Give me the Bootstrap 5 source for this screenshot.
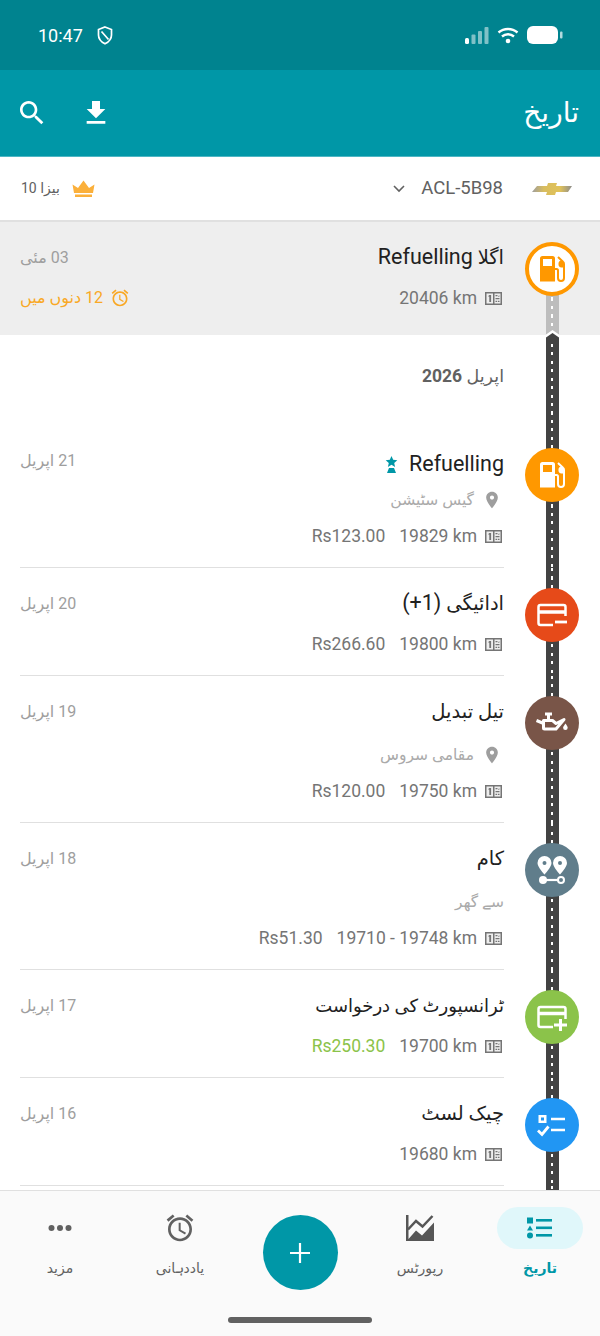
<!DOCTYPE html>
<html lang="ur" dir="rtl">
<head>
    <meta charset="UTF-8">
    <title>تاریخ</title>
    <link href="https://cdn.jsdelivr.net/npm/bootstrap@5.3.0/dist/css/bootstrap.min.css" rel="stylesheet">
    <style>
        body {
            font-family: Roboto, "DejaVu Sans", sans-serif;
            background: #fff;
            overflow: hidden;
        }
        .app-shell { height: 1336px; }

        .status-bar { height: 70px; flex: none; background: #00838f; color: #fff; padding: 0 37px 0 38px; font-size: 18px; }
        .status-time { margin-right: 6px; }
        .app-bar { height: 87px; flex: none; background: #0097a7; color: #fff; padding: 0 21px 0 16px; border-bottom: 1px solid #4db6c4; }
        .app-title { font-size: 28px; line-height: 1; }
        .bar-actions { gap: 32px; }
        .vehicle-bar { height: 65px; flex: none; border-bottom: 2px solid #e0e0e0; padding: 0 28px 0 21px; }
        .vehicle-name { font-size: 18.500px; color: #616161; margin: 0 29px 0 16px; }
        .plan-label { font-size: 14px; color: #616161; margin-right: 12px; }

        .timeline { min-height: 0; }
        .entry-row { display: flex; }
        .entry-row.is-next { background: #eee; height: 113px; }
        .road-col {
            flex: 0 0 96px;
            background:
                repeating-linear-gradient(to bottom, #fff 0 3px, transparent 3px 8.500px) center / 2px 100% no-repeat,
                linear-gradient(#424242, #424242) center / 13px 100% no-repeat;
        }
        .is-next .road-col {
            background:
                repeating-linear-gradient(to bottom, #fff 0 3px, transparent 3px 8.500px) center 50px / 2px 100% no-repeat,
                linear-gradient(#bdbdbd, #bdbdbd) center 50px / 13px 100% no-repeat;
        }
        .road-tip { width: 13px; height: 9px; margin-top: auto; margin-bottom: -4px; position: relative; z-index: 1; }
        .stop-dot {
            width: 54px; height: 54px; border-radius: 50%; margin-top: 20px; color: #fff; flex: none;
            display: flex; align-items: center; justify-content: center;
        }
        .stop-dot svg { flex: none; }
        .stop-dot.upcoming { background: #fff; border: 4px solid #ff9800; color: #ff9800; }
        .dot-orange { background: #ff9800; }
        .dot-red { background: #e64a19; }
        .dot-brown { background: #795548; }
        .dot-slate { background: #607d8b; }
        .dot-green { background: #8bc34a; }
        .dot-blue { background: #2196f3; }

        .entry-body { flex: 1; margin-left: 20px; border-bottom: 1px solid #e0e0e0; padding-bottom: 19px; min-width: 0; }
        .is-next .entry-body { border: 0; padding: 0; }
        .entry-title { font-size: 19.500px; line-height: 28px; min-height: 50px; padding-top: 22px; color: #212121; margin-bottom: 14px; }
        .entry-title.title-tight { font-size: 18px; }
        .title-latin { font-size: 21.500px; line-height: 1; }
        .entry-place { font-size: 15.500px; line-height: 24px; color: #aaa; padding-top: 3px; margin-bottom: 12px; }
        .entry-meta { font-size: 17.500px; line-height: 24px; color: #757575; gap: 14px; padding-right: 2px; }
        .entry-date { font-size: 16px; line-height: 24px; padding-top: 24px; color: #9e9e9e; text-align: left; }
        .latin-title .entry-title { margin-bottom: 7px; }
        .latin-title .entry-date { padding-top: 21px; }
        .odo-wrap { gap: 8px; }
        .place-pin { margin-left: 8px; margin-right: 2px; }
        .remind-line { font-size: 16px; line-height: 24px; color: #f9a825; margin-top: 16px; gap: 7px; }
        .fav-mark { margin-left: 0; margin-right: 11px; }
        .amount-in { color: #8bc34a; }

        .month-row { height: 93px; }
        .month-label { font-size: 17.500px; line-height: 24px; color: #616161; padding-top: 29px; }

        .bottom-tabs { background: #fafafa; border-top: 1px solid #e0e0e0; height: 146px; flex: none; }
        .tab-strip { height: 126px; }
        .tab-icon { width: 86px; height: 42px; margin-top: 16px; border-radius: 21px; }
        .tab-item { color: #616161; font-size: 14px; }
        .tab-item.active-tab { color: #0097a7; font-weight: 700; }
        .active-tab .tab-icon { background: #e0f7fa; }
        .tab-text { line-height: 24px; margin-top: 7px; }
        .fab-add {
            width: 75px; height: 75px; margin-top: 24px; padding: 0; background: #0097a7; border: 0;
            display: inline-flex; align-items: center; justify-content: center;
        }
        .home-pill { width: 144px; height: 6px; border-radius: 3px; background: #616161; }
    </style>
</head>
<body>
<svg width="0" height="0" class="d-block">
    <defs>
        <symbol id="i-pump" viewBox="0 0 54 54">
            <path fill="currentColor" fill-rule="evenodd" d="M15 16.500a2.500 2.500 0 0 1 2.500-2.500h10a2.500 2.500 0 0 1 2.500 2.500V39.500H15zM18 17v7h9v-7z"/>
            <path fill="none" stroke="currentColor" stroke-width="2" d="M30 27h1.500a1.500 1.500 0 0 1 1.500 1.500v7.500a3 3 0 0 0 6 0V22a3 3 0 0 0-1-2.200L33 15"/>
            <path fill="currentColor" d="M33.500 22a3 3 0 0 1 3-3.500l2 2v5h-2a3 3 0 0 1-3-3.500z"/>
        </symbol>
        <symbol id="i-card-minus" viewBox="0 0 54 54">
            <path fill="none" stroke="#fff" stroke-width="2.500" d="M28 37H15.500a2 2 0 0 1-2-2V19a2 2 0 0 1 2-2h23a2 2 0 0 1 2 2v9"/>
            <path stroke="#fff" stroke-width="3.500" d="M14 24h26"/>
            <path stroke="#fff" stroke-width="2.800" d="M30 34h12"/>
        </symbol>
        <symbol id="i-card-plus" viewBox="0 0 54 54">
            <path fill="none" stroke="#fff" stroke-width="2.500" d="M28 37H15.500a2 2 0 0 1-2-2V19a2 2 0 0 1 2-2h23a2 2 0 0 1 2 2v10"/>
            <path stroke="#fff" stroke-width="3.500" d="M14 23.500h26"/>
            <path stroke="#fff" stroke-width="3" d="M29 35h13M35.500 29v12"/>
        </symbol>
        <symbol id="i-oil" viewBox="0 0 54 54">
            <path fill="none" stroke="#fff" stroke-width="3" stroke-linejoin="round" d="M18.500 24.500h9l3.500 3 8-4-8 9.500H19.500a1 1 0 0 1-1-1zM20 18h7M23.500 18v6.500M17.500 27l-6-2.500"/>
            <path fill="#fff" d="M40.500 27.500c1.200 2 2.200 3 2.200 4.300a2.300 2.300 0 0 1-4.600 0c0-1.300 1.200-2.300 2.400-4.300z"/>
        </symbol>
        <symbol id="i-route" viewBox="0 0 54 54">
            <path fill="#fff" fill-rule="evenodd" d="M19.500 13a7 7 0 0 1 7 7c0 4-7 11.500-7 11.500s-7-7.500-7-11.500a7 7 0 0 1 7-7zm0 5a2 2 0 1 0 0 4 2 2 0 0 0 0-4zM35 13a7 7 0 0 1 7 7c0 4-7 11.500-7 11.500s-7-7.500-7-11.500a7 7 0 0 1 7-7zm0 5a2 2 0 1 0 0 4 2 2 0 0 0 0-4z"/>
            <circle cx="18" cy="37" r="4" fill="#fff"/>
            <circle cx="36" cy="37" r="3" fill="none" stroke="#fff" stroke-width="2"/>
            <path stroke="#fff" stroke-width="2.200" d="M20 37h13"/>
        </symbol>
        <symbol id="i-check" viewBox="0 0 54 54">
            <path fill="#fff" fill-rule="evenodd" d="M13.500 17h8v8h-8zm2.500 2.500v3h3v-3z"/>
            <path stroke="#fff" stroke-width="2.400" d="M26 21h14M26 32h14"/>
            <path fill="none" stroke="#fff" stroke-width="2.800" d="M13 32.500l4 4 6.500-8"/>
        </symbol>
        <symbol id="i-odo" viewBox="0 0 17 13">
            <rect width="17" height="13" fill="#757575"/>
            <path fill="#eee" d="M1.500 1.500h6.500v10H1.500zM9.500 1.500h6v10h-6z"/>
            <path fill="#757575" d="M4.300 3h1.800v7H4.300zM3 4.200l1.300-1.200v1.800zM10.500 3h2v1.300h-2zM13 4.500l1.300-1.500v2zM10.500 6h4v1.300h-4zM10.500 8.700h1.500v1.300h-1.500zM12.800 8.700h1.700v1.300h-1.700z"/>
        </symbol>
        <symbol id="i-pin" viewBox="0 0 24 24">
            <path fill="#9e9e9e" d="M12 2C8.130 2 5 5.130 5 9c0 5.250 7 13 7 13s7-7.750 7-13c0-3.870-3.130-7-7-7zm0 9.500c-1.380 0-2.500-1.120-2.500-2.500s1.120-2.500 2.500-2.500 2.500 1.120 2.500 2.500-1.120 2.500-2.500 2.500z"/>
        </symbol>
        <symbol id="i-alarm" viewBox="0 0 24 24">
            <path fill="currentColor" d="M22 5.720l-4.600-3.860-1.290 1.530 4.600 3.860L22 5.720zM7.880 3.390L6.600 1.860 2 5.710l1.290 1.530 4.590-3.850zM12.500 8H11v6l4.750 2.850.75-1.230-4-2.370V8zM12 4c-4.970 0-9 4.030-9 9s4.030 9 9 9 9-4.030 9-9-4.030-9-9-9zm0 16c-3.870 0-7-3.130-7-7s3.130-7 7-7 7 3.130 7 7-3.130 7-7 7z"/>
        </symbol>
    </defs>
</svg>

<div class="app-shell d-flex flex-column">
    <div class="status-bar d-flex align-items-center justify-content-between" dir="ltr">
        <div class="d-flex align-items-center gap-2">
            <span class="status-time">10:47</span>
            <svg width="16" height="19" viewBox="0 0 16 19"><path fill="none" stroke="#fff" stroke-width="1.700" d="M8 1l6.500 2.500v5.500c0 4-2.800 7-6.500 8.800C4.300 16 1.500 13 1.500 9V3.500zM4.500 5.500l7 8"/></svg>
        </div>
        <div class="d-flex align-items-center">
            <svg width="24" height="17" viewBox="0 0 24 17" fill="#fff"><rect y="11" width="4" height="6" rx="1.500"/><rect x="6.500" y="7.500" width="4" height="9.500" rx="1" opacity=".5"/><rect x="13" y="4" width="4" height="13" rx="1" opacity=".5"/><rect x="19.500" y="0" width="4" height="17" rx="1" opacity=".5"/></svg>
            <svg class="ms-2" width="22" height="17" viewBox="0 0 22 17"><path fill="none" stroke="#fff" stroke-width="2.400" d="M1.500 5.500c5.500-4.700 13.500-4.700 19 0M5 9.500c3.500-3 8.500-3 12 0"/><circle cx="11" cy="14" r="2.300" fill="#fff"/></svg>
            <svg class="ms-2" width="36" height="18" viewBox="0 0 36 18" fill="#fff"><rect width="31" height="18" rx="6"/><rect x="33" y="5.500" width="2.500" height="7" rx="1" opacity=".7"/></svg>
        </div>
    </div>

    <div class="app-bar d-flex align-items-center justify-content-between">
        <div class="app-title">تاریخ</div>
        <div class="bar-actions d-flex align-items-center">
            <svg width="32" height="32" viewBox="0 0 24 24" fill="#fff"><path d="M19 9h-4V3H9v6H5l7 7 7-7zM5 18v2h14v-2H5z"/></svg>
            <svg width="32" height="32" viewBox="0 0 24 24" fill="#fff"><path d="M15.500 14h-.790l-.280-.270C15.410 12.590 16 11.110 16 9.500 16 5.910 13.090 3 9.500 3S3 5.910 3 9.500 5.910 16 9.500 16c1.610 0 3.090-.590 4.230-1.570l.270.280v.790l5 4.990L20.490 19l-4.990-5zm-6 0C7.010 14 5 11.990 5 9.500S7.010 5 9.500 5 14 7.010 14 9.500 11.990 14 9.500 14z"/></svg>
        </div>
    </div>

    <div class="vehicle-bar d-flex align-items-center justify-content-between">
        <div class="d-flex align-items-center">
            <svg width="40" height="12" viewBox="0 0 40 12">
                <defs><linearGradient id="bowGold" x1="0" x2="1"><stop offset="0" stop-color="#9e9e9e"/><stop offset=".3" stop-color="#d9bd5e"/><stop offset=".7" stop-color="#e0c25a"/><stop offset="1" stop-color="#8d8d8d"/></linearGradient></defs>
                <path fill="url(#bowGold)" d="M5 3h10l1-3h9l-1 3h16l-4 6H24l-1 3h-9l1-3H0z"/>
            </svg>
            <span class="vehicle-name" dir="ltr">ACL-5B98</span>
            <svg width="12" height="8" viewBox="0 0 12 8"><path fill="none" stroke="#616161" stroke-width="1.600" d="M1 1l5 5 5-5"/></svg>
        </div>
        <div class="d-flex align-items-center">
            <svg width="23" height="17" viewBox="0 0 23 17" fill="#fbb03b"><path d="M2 13L0.500 4.500l5.500 3.500L11.500 0.500 17 8l5.500-3.500L21 13zM3 14.500h17V17H3z"/></svg>
            <span class="plan-label">بیزا 10</span>
        </div>
    </div>

    <div class="timeline flex-grow-1 overflow-hidden">
        <div class="entry-row is-next">
            <div class="road-col d-flex flex-column align-items-center">
                <div class="stop-dot upcoming"><svg width="54" height="54"><use href="#i-pump"/></svg></div>
                <svg class="road-tip" viewBox="0 0 13 9"><path fill="#fff" d="M0 9V4.500L6.500 0 13 4.500V9z"/><path fill="#424242" d="M0 9V7.500L6.500 3 13 7.500V9z"/></svg>
            </div>
            <div class="entry-body d-flex justify-content-between">
                <div>
                    <div class="entry-title">اگلا <span class="title-latin">Refuelling</span></div>
                    <div class="entry-meta d-flex">
                        <span class="odo-wrap d-flex align-items-center"><svg width="17" height="13"><use href="#i-odo"/></svg><span dir="ltr">20406 km</span></span>
                    </div>
                </div>
                <div>
                    <div class="entry-date">03 مئی</div>
                    <div class="remind-line d-flex align-items-center"><svg width="20" height="20"><use href="#i-alarm"/></svg><span>12 دنوں میں</span></div>
                </div>
            </div>
        </div>

        <div class="entry-row month-row">
            <div class="road-col"></div>
            <div class="flex-grow-1 month-label">اپریل <b>2026</b></div>
        </div>

        <div class="entry-row latin-title">
            <div class="road-col d-flex justify-content-center align-items-start"><div class="stop-dot dot-orange"><svg width="54" height="54"><use href="#i-pump"/></svg></div></div>
            <div class="entry-body d-flex justify-content-between">
                <div>
                    <div class="entry-title d-flex align-items-center">
                        <span class="title-latin" dir="ltr">Refuelling</span>
                        <svg class="fav-mark" width="13" height="17" viewBox="0 0 13 17" fill="#0097a7"><path d="M6.500 0l1.700 3.800 4.100.4-3.100 2.700.9 4-3.600-2.100-3.600 2.100.9-4L.7 4.200l4.100-.4zM4 12h5l2 5H2z"/></svg>
                    </div>
                    <div class="entry-place d-flex align-items-center"><svg class="place-pin" width="20" height="20"><use href="#i-pin"/></svg><span>گیس سٹیشن</span></div>
                    <div class="entry-meta d-flex">
                        <span class="odo-wrap d-flex align-items-center"><svg width="17" height="13"><use href="#i-odo"/></svg><span dir="ltr">19829 km</span></span>
                        <span dir="ltr">Rs123.00</span>
                    </div>
                </div>
                <div class="entry-date">21 اپریل</div>
            </div>
        </div>

        <div class="entry-row">
            <div class="road-col d-flex justify-content-center align-items-start"><div class="stop-dot dot-red"><svg width="54" height="54"><use href="#i-card-minus"/></svg></div></div>
            <div class="entry-body d-flex justify-content-between">
                <div>
                    <div class="entry-title">ادائیگی <span class="title-latin">(1+)</span></div>
                    <div class="entry-meta d-flex">
                        <span class="odo-wrap d-flex align-items-center"><svg width="17" height="13"><use href="#i-odo"/></svg><span dir="ltr">19800 km</span></span>
                        <span dir="ltr">Rs266.60</span>
                    </div>
                </div>
                <div class="entry-date">20 اپریل</div>
            </div>
        </div>

        <div class="entry-row">
            <div class="road-col d-flex justify-content-center align-items-start"><div class="stop-dot dot-brown"><svg width="54" height="54"><use href="#i-oil"/></svg></div></div>
            <div class="entry-body d-flex justify-content-between">
                <div>
                    <div class="entry-title">تیل تبدیل</div>
                    <div class="entry-place d-flex align-items-center"><svg class="place-pin" width="20" height="20"><use href="#i-pin"/></svg><span>مقامی سروس</span></div>
                    <div class="entry-meta d-flex">
                        <span class="odo-wrap d-flex align-items-center"><svg width="17" height="13"><use href="#i-odo"/></svg><span dir="ltr">19750 km</span></span>
                        <span dir="ltr">Rs120.00</span>
                    </div>
                </div>
                <div class="entry-date">19 اپریل</div>
            </div>
        </div>

        <div class="entry-row">
            <div class="road-col d-flex justify-content-center align-items-start"><div class="stop-dot dot-slate"><svg width="54" height="54"><use href="#i-route"/></svg></div></div>
            <div class="entry-body d-flex justify-content-between">
                <div>
                    <div class="entry-title">کام</div>
                    <div class="entry-place">سے گھر</div>
                    <div class="entry-meta d-flex">
                        <span class="odo-wrap d-flex align-items-center"><svg width="17" height="13"><use href="#i-odo"/></svg><span dir="ltr">19710 - 19748 km</span></span>
                        <span dir="ltr">Rs51.30</span>
                    </div>
                </div>
                <div class="entry-date">18 اپریل</div>
            </div>
        </div>

        <div class="entry-row">
            <div class="road-col d-flex justify-content-center align-items-start"><div class="stop-dot dot-green"><svg width="54" height="54"><use href="#i-card-plus"/></svg></div></div>
            <div class="entry-body d-flex justify-content-between">
                <div>
                    <div class="entry-title title-tight">ٹرانسپورٹ کی درخواست</div>
                    <div class="entry-meta d-flex">
                        <span class="odo-wrap d-flex align-items-center"><svg width="17" height="13"><use href="#i-odo"/></svg><span dir="ltr">19700 km</span></span>
                        <span class="amount-in" dir="ltr">Rs250.30</span>
                    </div>
                </div>
                <div class="entry-date">17 اپریل</div>
            </div>
        </div>

        <div class="entry-row">
            <div class="road-col d-flex justify-content-center align-items-start"><div class="stop-dot dot-blue"><svg width="54" height="54"><use href="#i-check"/></svg></div></div>
            <div class="entry-body d-flex justify-content-between">
                <div>
                    <div class="entry-title">چیک لسٹ</div>
                    <div class="entry-meta d-flex">
                        <span class="odo-wrap d-flex align-items-center"><svg width="17" height="13"><use href="#i-odo"/></svg><span dir="ltr">19680 km</span></span>
                    </div>
                </div>
                <div class="entry-date">16 اپریل</div>
            </div>
        </div>

        <div class="entry-row">
            <div class="road-col" style="height: 40px"></div>
            <div class="flex-grow-1"></div>
        </div>
    </div>

    <div class="bottom-tabs">
        <div class="row g-0 tab-strip text-center">
            <div class="col tab-item active-tab d-flex flex-column align-items-center">
                <div class="tab-icon d-flex align-items-center justify-content-center">
                    <svg width="26" height="22" viewBox="0 0 26 22" fill="#0097a7"><rect x="0" y="0.500" width="6" height="6"/><path d="M3 8.500l3 5H0z"/><circle cx="3" cy="18.500" r="3"/><rect x="9" y="2" width="16" height="2.600"/><rect x="9" y="9.500" width="16" height="2.600"/><rect x="9" y="17" width="16" height="2.600"/></svg>
                </div>
                <div class="tab-text">تاریخ</div>
            </div>
            <div class="col tab-item d-flex flex-column align-items-center">
                <div class="tab-icon d-flex align-items-center justify-content-center">
                    <svg width="28" height="26" viewBox="0 0 28 26"><path fill="#565656" d="M0 0h2.500v26H0zM2.500 26V24l7.500-8.500 6 5L28 7.500V26z"/><path fill="none" stroke="#565656" stroke-width="2.500" d="M2 14.500l8-8.500 6.500 5.500L26.500 1"/></svg>
                </div>
                <div class="tab-text">رپورٹس</div>
            </div>
            <div class="col d-flex justify-content-center align-items-start">
                <button type="button" class="btn fab-add rounded-circle" aria-label="شامل کریں">
                    <svg width="20" height="20" viewBox="0 0 20 20"><path stroke="#fff" stroke-width="2.200" d="M10 0v20M0 10h20"/></svg>
                </button>
            </div>
            <div class="col tab-item d-flex flex-column align-items-center">
                <div class="tab-icon d-flex align-items-center justify-content-center"><svg width="32" height="32"><use href="#i-alarm"/></svg></div>
                <div class="tab-text">یاددہانی</div>
            </div>
            <div class="col tab-item d-flex flex-column align-items-center">
                <div class="tab-icon d-flex align-items-center justify-content-center">
                    <svg width="24" height="6" viewBox="0 0 24 6" fill="#616161"><circle cx="3.500" cy="3" r="3"/><circle cx="12" cy="3" r="3"/><circle cx="20.500" cy="3" r="3"/></svg>
                </div>
                <div class="tab-text">مزید</div>
            </div>
        </div>
        <div class="home-pill mx-auto"></div>
    </div>
</div>

<script src="https://cdn.jsdelivr.net/npm/bootstrap@5.3.0/dist/js/bootstrap.bundle.min.js"></script>
</body>
</html>
